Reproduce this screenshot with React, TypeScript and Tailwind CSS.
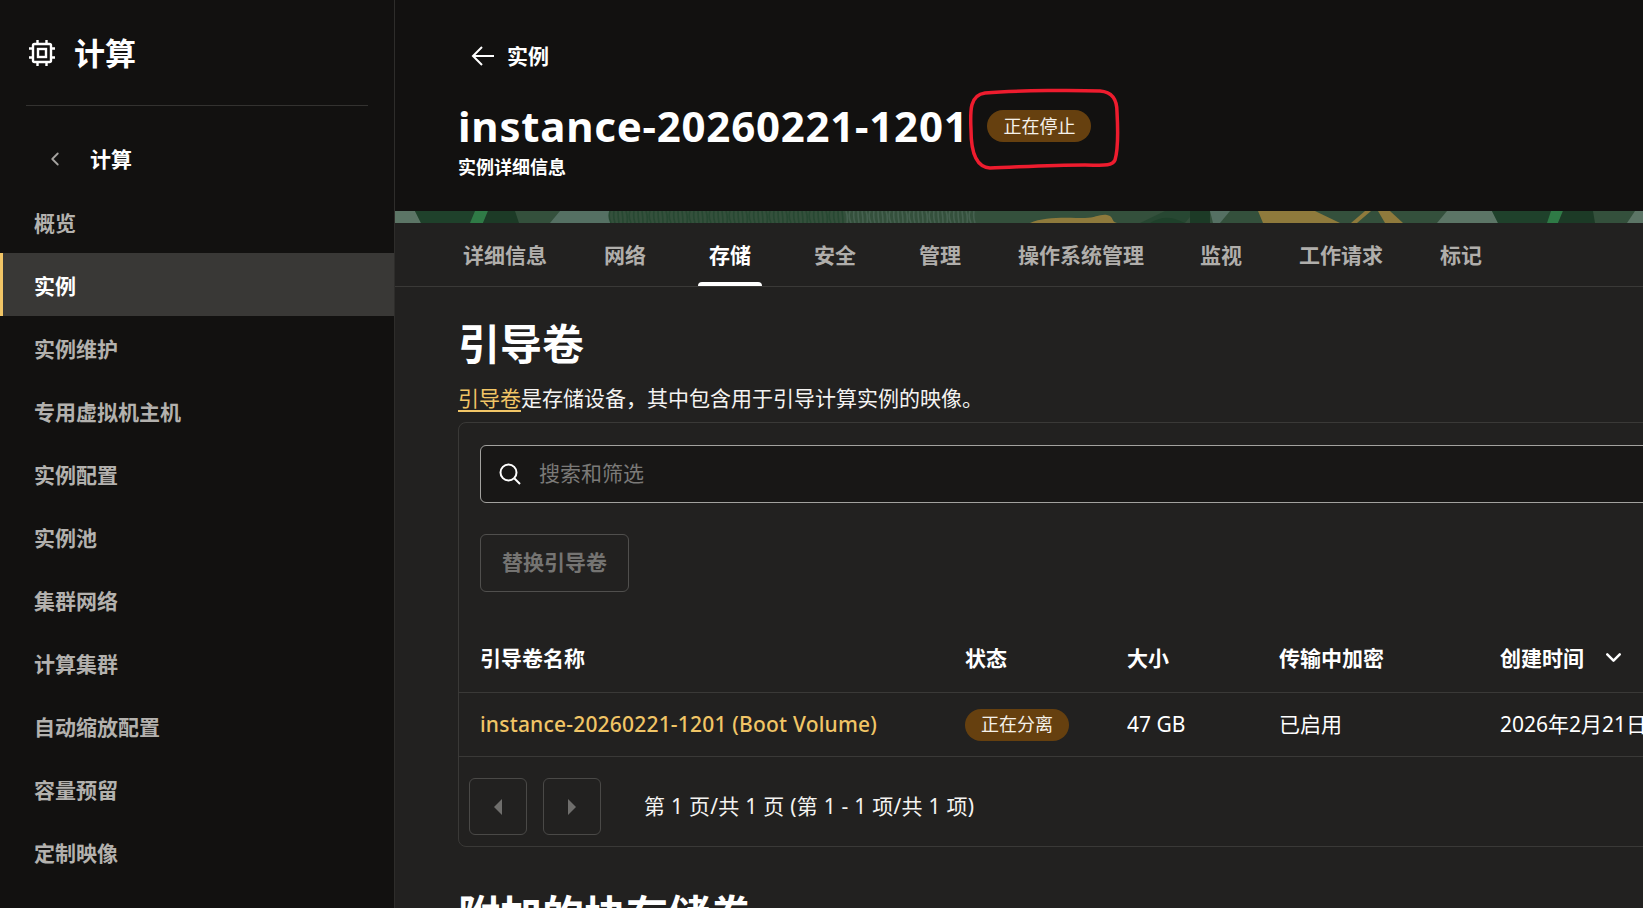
import { ChevronLeft, ChevronDown } from "lucide-react";

const menuItems = [
  "概览",
  "实例",
  "实例维护",
  "专用虚拟机主机",
  "实例配置",
  "实例池",
  "集群网络",
  "计算集群",
  "自动缩放配置",
  "容量预留",
  "定制映像",
];

const tabs = [
  { label: "详细信息", className: "" },
  { label: "网络", className: "" },
  { label: "存储", className: "ml-[6px]" },
  { label: "安全", className: "ml-[6px]" },
  { label: "管理", className: "ml-[6px]" },
  { label: "操作系统管理", className: "" },
  { label: "监视", className: "-ml-[1px]" },
  { label: "工作请求", className: "" },
  { label: "标记", className: "" },
];

// fingerprint lines in the banner
const stripeX = Array.from({ length: 92 }, (_, i) => 215 + i * 4);

function ChipIcon() {
  return (
    <svg width="28" height="28" viewBox="0 0 28 28" fill="none" stroke="white" strokeWidth="2.4">
      <rect x="5" y="5" width="18" height="18" rx="1.5" />
      <rect x="10" y="10" width="8" height="8" />
      <path d="M9.5 1v4M18.5 1v4M9.5 23v4M18.5 23v4M1 9.5h4M1 18.5h4M23 9.5h4M23 18.5h4" />
    </svg>
  );
}

// decorative strip under the page header
function Banner() {
  return (
    <svg className="block h-[12px] w-full" viewBox="0 0 1248 12" preserveAspectRatio="none">
      <rect width="1248" height="12" fill="#34503c" />
      <path d="M0 0H20L26 12H0Z" fill="#5c7566" />
      <path d="M20 0H85L81 12H26Z" fill="#1f412b" />
      <path d="M80 0H93L88 12H75Z" fill="#2f7a46" />
      <path d="M93 0H120L124 12H88Z" fill="#1c3a26" />
      <path d="M165 0H215V12H155Z" fill="#557063" />
      {stripeX.map((x, i) => (
        <path
          key={x}
          d={`M${x} 0Q${x + (i % 5) - 2} 6 ${x + 1} 12`}
          fill="none"
          stroke={x > 450 ? "#466150" : "#274832"}
          strokeWidth="1.6"
        />
      ))}
      <path d="M635 12C650 5 675 7 690 7C700 7 705 3 712 4C720 6 715 10 722 12Z" fill="#8f7a3c" />
      <path d="M755 12C765 6 775 4 790 12Z" fill="#1f412b" />
      <path d="M770 0H800L790 12H745Z" fill="#1f412b" opacity="0.6" />
      <path d="M795 0H815V12H795Z" fill="#1c3a26" />
      <path d="M815 0H835L825 12H818Z" fill="#557063" />
      <path d="M863 0H920L945 12H868Z" fill="#8f7a3c" />
      <path d="M970 0H976L962 12H956Z" fill="#8f7a3c" />
      <path d="M983 0H995L1008 12H990Z" fill="#8f7a3c" />
      <path d="M1052 0H1097L1103 12H1042Z" fill="#5c7566" />
      <path d="M1097 0H1158L1155 12H1103Z" fill="#1f412b" />
      <path d="M1156 0H1168L1163 12H1152Z" fill="#2f7a46" />
      <path d="M1168 0H1198L1200 12H1163Z" fill="#1c3a26" />
      <path d="M1240 0H1248V12H1232Z" fill="#5c7566" />
    </svg>
  );
}

function StatusBadge({ label }: { label: string }) {
  return (
    <span className="inline-flex h-[32px] w-[104px] items-center justify-center rounded-full bg-[#66400f] text-[18px] text-[#f5f1ea]">
      {label}
    </span>
  );
}

export default function App() {
  return (
    <div className="flex h-screen overflow-hidden bg-[#222120] font-['Noto_Sans','Noto_Sans_CJK_SC',sans-serif] text-white">
      <aside className="w-[395px] shrink-0 border-r border-[#2e2d2b] bg-[#121110]">
        <div className="flex h-[105px] items-center gap-[18px] pl-[28px]">
          <ChipIcon />
          <span className="mt-[2px] text-[31px] leading-none font-bold">计算</span>
        </div>
        <div className="mx-[26px] border-t border-[#333230]" />
        <div className="mt-[21px] flex h-[63px] items-center gap-[24px] pl-[44px]">
          <ChevronLeft size={22} strokeWidth={2} className="text-[#a5a3a0]" />
          <span className="pt-[2px] text-[21px] font-bold">计算</span>
        </div>
        <nav>
          {menuItems.map((item) => (
            <div
              key={item}
              className={
                item === "实例"
                  ? "flex h-[63px] items-center border-l-[3px] border-[#f1c566] bg-[#393836] pt-[5px] pl-[31px] text-[21px] font-bold text-white"
                  : "flex h-[63px] items-center pt-[5px] pl-[34px] text-[21px] font-bold text-[#b3b1ae]"
              }
            >
              {item}
            </div>
          ))}
        </nav>
      </aside>

      <main className="relative min-w-0 flex-1 overflow-hidden">
        <header className="h-[211px] bg-[#121110] pt-[41px] pl-[63px]">
          <div className="flex h-[30px] items-center gap-[12px] pl-[13px]">
            <svg width="24" height="24" viewBox="0 0 24 24" fill="none" stroke="white" strokeWidth="2">
              <path d="M23 12H2M11 3l-9 9 9 9" />
            </svg>
            <span className="pt-[2px] text-[21px] font-bold">实例</span>
          </div>
          <div className="mt-[31px] flex h-[48px] items-center gap-[19px]">
            <h1 className="text-[42px] leading-none font-bold tracking-[0.77px]">instance-20260221-1201</h1>
            <StatusBadge label="正在停止" />
          </div>
          <p className="mt-[5px] text-[18px] leading-[24px] font-bold">实例详细信息</p>
        </header>

        <Banner />

        <div className="flex h-[64px] items-stretch gap-[39px] border-b border-[#3a3937] pl-[59px]">
          {tabs.map((tab) =>
            tab.label === "存储" ? (
              <div key={tab.label} className={`relative flex items-center px-[9px] pt-[2px] text-[21px] font-bold text-white ${tab.className}`}>
                {tab.label}
                <span className="absolute -right-[2px] bottom-0 -left-[2px] h-[4px] rounded-t-[4px] bg-white" />
              </div>
            ) : (
              <div key={tab.label} className={`flex items-center px-[9px] pt-[2px] text-[21px] font-bold text-[#b0aeab] ${tab.className}`}>
                {tab.label}
              </div>
            ),
          )}
        </div>

        <section className="pl-[63px]">
          <h2 className="mt-[32px] text-[42px] leading-[50px] font-bold">引导卷</h2>
          <p className="mt-[14px] h-[31px] text-[21px] leading-[30px] text-[#f4f3f1]">
            <span className="text-[#f1c566] underline decoration-2 underline-offset-[4px]">引导卷</span>
            是存储设备，其中包含用于引导计算实例的映像。
          </p>

          <div className="mt-[8px] w-[1300px] rounded-[8px] border border-[#3a3937]">
            <div className="px-[21px] pt-[22px]">
              <div className="flex h-[58px] items-center gap-[18px] rounded-[6px] border border-[#a3a29f] bg-[#181716] pl-[18px]">
                <svg width="22" height="22" viewBox="0 0 22 22" fill="none" stroke="white" strokeWidth="2">
                  <circle cx="9.5" cy="9.5" r="8" />
                  <path d="M15.5 15.5L21 21" />
                </svg>
                <span className="text-[21px] text-[#7b7a78]">搜索和筛选</span>
              </div>
              <button className="mt-[31px] flex h-[58px] w-[149px] items-center justify-center rounded-[6px] border border-[#504f4d] text-[21px] font-bold text-[#757472]">
                替换引导卷
              </button>
            </div>

            <div className="mt-[33px] grid h-[68px] grid-cols-[485px_162px_152px_221px_1fr] items-center border-b border-[#3a3937] pl-[21px] text-[21px] font-bold">
              <span>引导卷名称</span>
              <span>状态</span>
              <span>大小</span>
              <span>传输中加密</span>
              <span className="flex items-center gap-[17px]">
                创建时间
                <ChevronDown size={25} strokeWidth={2.4} className="-mt-[3px]" />
              </span>
            </div>
            <div className="grid h-[64px] grid-cols-[485px_162px_152px_221px_1fr] items-center border-b border-[#3a3937] pl-[21px] text-[21px]">
              <span className="font-medium tracking-[0.2px] text-[#f1c566]">instance-20260221-1201 (Boot Volume)</span>
              <span>
                <StatusBadge label="正在分离" />
              </span>
              <span>47 GB</span>
              <span>已启用</span>
              <span>2026年2月21日</span>
            </div>

            <div className="flex h-[89px] items-start pt-[21px] pl-[10px]">
              <button className="flex h-[57px] w-[58px] items-center justify-center rounded-[6px] border border-[#4a4947]">
                <span className="h-0 w-0 border-y-[8px] border-r-[8px] border-y-transparent border-r-[#6f6e6c]" />
              </button>
              <button className="ml-[16px] flex h-[57px] w-[58px] items-center justify-center rounded-[6px] border border-[#4a4947]">
                <span className="h-0 w-0 border-y-[8px] border-l-[8px] border-y-transparent border-l-[#6f6e6c]" />
              </button>
              <span className="mt-[13px] ml-[43px] text-[21px] tracking-[0.25px] text-[#f4f3f1]">第 1 页/共 1 页 (第 1 - 1 项/共 1 项)</span>
            </div>
          </div>

          <h2 className="mt-[43px] text-[42px] leading-[50px] font-bold">附加的块存储卷</h2>
        </section>

        {/* red marker drawn over the screenshot */}
        <svg className="absolute top-[88px] left-[574px]" width="152" height="84" viewBox="0 0 152 84" fill="none">
          <path
            d="M16 5C50 2 110 2 131 3C144 4 148 12 148 24C149 42 149 62 146 72C143 79 131 77 116 77C81 77 51 79 21 80C6 79 2 62 2 42C1 22 1 7 16 5Z"
            stroke="#ee1c2e"
            strokeWidth="3.5"
          />
        </svg>
      </main>
    </div>
  );
}
